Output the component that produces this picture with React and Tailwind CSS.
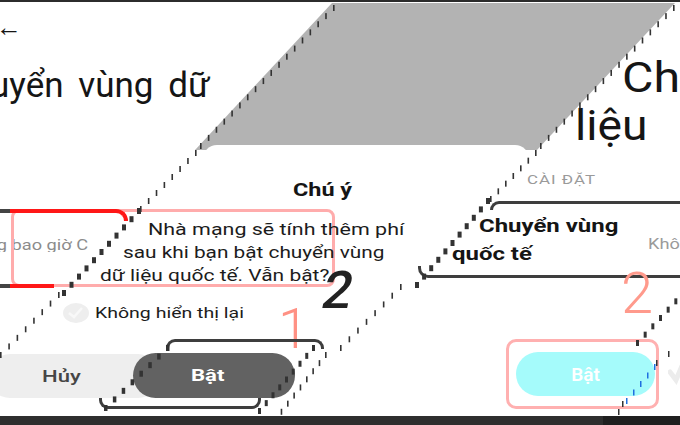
import React from 'react';

// diagonal "staircase" tick marks left by the screenshot seams
const seams = [
  { from: [333, 5], to: [200, 143], w: 1.6, color: '#333' },
  { from: [195, 150], to: [140, 206], w: 1.6, color: '#333' },
  { from: [137, 208], to: [62, 290], w: 4, color: '#333' },
  { from: [58, 292], to: [0, 352], w: 1.6, color: '#333' },
  { from: [673, 5], to: [540, 143], w: 1.6, color: '#333' },
  { from: [535, 150], to: [490, 196], w: 1.6, color: '#333' },
  { from: [486, 198], to: [415, 282], w: 4, color: '#333' },
  { from: [400, 284], to: [340, 345], w: 1.6, color: '#333' },
  { from: [325, 352], to: [268, 425], w: 1.6, color: '#333' },
  { from: [166, 345], to: [104, 405], w: 3.5, color: '#333' },
  { from: [312, 345], to: [258, 408], w: 3, color: '#333' },
  { from: [682, 290], to: [636, 340], w: 3, color: '#333' },
  { from: [680, 342], to: [656, 360], w: 1.5, color: '#333' },
  { from: [654, 364], to: [626, 398], w: 1.5, color: '#1f6fe0' },
  { from: [622, 401], to: [610, 425], w: 1.5, color: '#333' },
];

function Seam({ from, to, w, color }) {
  const [x0, y0] = from;
  const [x1, y1] = to;
  const n = Math.max(1, Math.round(Math.abs(y1 - y0) / 8.3));
  const rects = [];
  for (let i = 0; i <= n; i++) {
    const t = i / n;
    rects.push(
      <rect key={i} x={x0 + (x1 - x0) * t} y={y0 + (y1 - y0) * t} width={w} height={6} fill={color} />
    );
  }
  return <g>{rects}</g>;
}

export default function App() {
  return (
    <div className="relative w-[680px] h-[425px] overflow-hidden bg-white font-['Roboto','Noto_Sans',sans-serif] text-[#151515]">
      {/* top edge */}
      <div className="absolute left-0 top-0 w-full h-[2px] bg-[#2c2c2c]" />

      {/* ---------- right screenshot ---------- */}
      <div className="absolute left-[622px] top-[57px] text-[42px] leading-none whitespace-nowrap origin-left scale-x-[1.15]">Chuyển vùng dữ</div>
      <div className="absolute left-[575px] top-[105px] text-[42px] leading-none whitespace-nowrap origin-left scale-x-[1.1]">liệu</div>
      <div className="absolute left-[527px] top-[173px] text-[13px] leading-none tracking-[0.06em] text-[#9a9a9a] origin-left scale-x-[1.3] whitespace-nowrap">CÀI ĐẶT</div>

      <div className="absolute left-[490px] top-[201px] w-[220px] h-[9px] border-t-[3px] border-l-[3px] border-[#3e3e3e] rounded-tl-[10px]" />
      <div className="absolute left-[418px] top-[266px] w-[290px] h-[12px] border-b-[3px] border-l-[3px] border-[#3e3e3e] rounded-bl-[10px]" />
      <div className="absolute left-[452px] top-[217px] flex flex-col items-start gap-[10px] text-[18px] font-bold leading-none whitespace-nowrap">
        <span className="ml-[27px] origin-left scale-x-[1.33]">Chuyển vùng</span>
        <span className="origin-left scale-x-[1.33]">quốc tế</span>
      </div>
      <div className="absolute left-[648px] top-[237px] text-[14px] leading-none text-[#9a9a9a] origin-left scale-x-[1.3] whitespace-nowrap">Không bao giờ</div>

      <div className="absolute left-[621px] top-[264px] text-[58px] font-light leading-none text-[#ff9a8c]">2</div>

      <div className="absolute left-[506px] top-[339px] w-[153px] h-[70px] border-[3px] border-[#ffb0b0] rounded-[10px] flex items-center justify-end pr-[1px]">
        <div className="w-[139px] h-[44px] rounded-full bg-[#a5fbfb] flex items-center justify-center">
          <span className="text-[19px] font-semibold text-white leading-none">Bật</span>
        </div>
      </div>
      <svg className="absolute left-[668px] top-[360px]" width="14" height="26" viewBox="0 0 14 26">
        <path d="M2 12 L8 20 L14 6" fill="none" stroke="#ececec" strokeWidth="5" strokeLinecap="round" />
      </svg>

      {/* ---------- left screenshot ---------- */}
      <div className="absolute left-[-4px] top-[14px] text-[26px] leading-none">←</div>
      <div className="absolute left-[-52px] top-[68px] text-[35px] leading-none whitespace-nowrap [word-spacing:6px]">Chuyển vùng dữ</div>

      <div className="absolute left-[-45px] top-[238px] w-[133px] overflow-hidden">
        <div className="text-[14px] leading-none text-[#8c8c8c] whitespace-nowrap origin-left scale-x-[1.3]">Không bao giờ Chuyển vùng</div>
      </div>

      {/* pink & red highlight boxes */}
      <div className="absolute left-[11px] top-[209px] w-[324px] h-[78px] border-[3px] border-[#ffacac] rounded-[8px]" />
      <div className="absolute left-0 top-[209px] w-[12px] h-[4px] bg-[#444]" />
      <div className="absolute left-0 top-[284px] w-[12px] h-[4px] bg-[#444]" />
      <div className="absolute left-[10px] top-[209px] w-[118px] h-[12px] border-t-[4px] border-r-[4px] border-[#ff1717] rounded-tr-[12px]" />
      <div className="absolute left-[10px] top-[284px] w-[44px] h-[4px] bg-[#ff1717]" />

      {/* dialog */}
      <div className="absolute left-[293px] top-[181px] text-[18px] font-bold leading-none origin-left scale-x-[1.3] whitespace-nowrap">Chú ý</div>
      <div className="absolute left-[100px] top-[222px] flex flex-col items-start gap-[7px] text-[16px] leading-none text-[#1c1c1c] whitespace-nowrap">
        <span className="ml-[48px] origin-left scale-x-[1.34]">Nhà mạng sẽ tính thêm phí</span>
        <span className="ml-[23px] origin-left scale-x-[1.3]">sau khi bạn bật chuyển vùng</span>
        <span className="origin-left scale-x-[1.31]">dữ liệu quốc tế. Vẫn bật?</span>
      </div>

      <div className="absolute left-[323px] top-[265px] text-[52px] font-medium leading-none text-[#222] origin-left -skew-x-[12deg]">2</div>

      <div className="absolute left-[62px] top-[302px] flex items-center gap-[5px]">
        <svg width="28" height="22" viewBox="0 0 28 22">
          <ellipse cx="14" cy="11" rx="13" ry="10" fill="#eeeeee" />
          <path d="M7 11 L12 15 L20 6" fill="none" stroke="#f8f8f8" strokeWidth="2.5" />
        </svg>
        <span className="text-[15px] leading-none text-[#1c1c1c] origin-left scale-x-[1.3] whitespace-nowrap">Không hiển thị lại</span>
      </div>

      <div className="absolute left-[278px] top-[301px] text-[56px] font-light leading-none text-[#ff9184]">1</div>

      {/* buttons */}
      <div className="absolute left-[-12px] top-[354px] w-[172px] h-[44px] rounded-full bg-[#eeeeee] flex items-center pl-[54px]">
        <span className="text-[17px] font-medium leading-none text-[#454545] origin-left scale-x-[1.3]">Hủy</span>
      </div>
      <div className="absolute left-[166px] top-[339px] w-[158px] h-[10px] border-t-[3px] border-x-[3px] border-[#3e3e3e] rounded-t-[9px]" />
      <div className="absolute left-[99px] top-[398px] w-[162px] h-[11px] border-b-[3px] border-x-[3px] border-[#3e3e3e] rounded-b-[9px]" />
      <div className="absolute left-[133px] top-[353px] w-[162px] h-[45px] rounded-full bg-[#626262] flex items-center pl-[58px]">
        <span className="text-[17px] font-bold leading-none text-white origin-left scale-x-[1.3]">Bật</span>
      </div>

      {/* grey backdrop between the seams */}
      <svg className="absolute left-0 top-0 pointer-events-none" width="680" height="425" viewBox="0 0 680 425">
        <polygon points="332,3 675,3 537,150 195,150" fill="#b3b3b3" />
        <rect x="203" y="145" width="326" height="30" rx="14" fill="#ffffff" />
        {seams.map((s, i) => (
          <Seam key={i} {...s} />
        ))}
      </svg>

      {/* bottom bar */}
      <div className="absolute left-0 bottom-0 w-full h-[9px] flex">
        <div className="w-[603px] bg-[#2e2e2e]" />
        <div className="flex-1 bg-[#1f1f1f]" />
      </div>
    </div>
  );
}
